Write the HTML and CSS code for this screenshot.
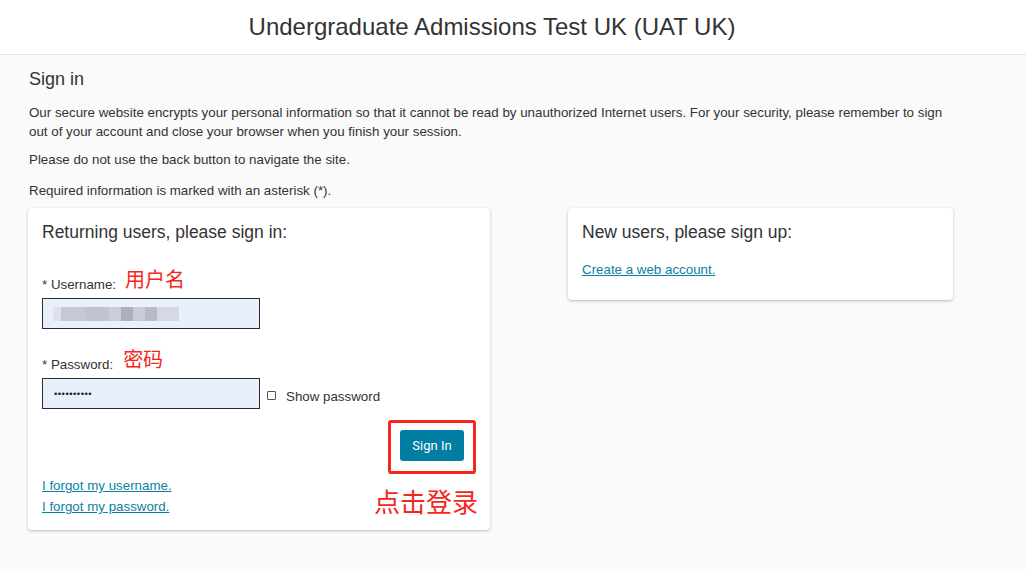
FILE: index.html
```html
<!DOCTYPE html>
<html>
<head>
<meta charset="utf-8">
<link rel="stylesheet" href="styles.css">
</head>
<body>
<header class="top">
  <h1 class="title">Undergraduate Admissions Test UK (UAT UK)</h1>
</header>
<main class="page">
  <h2 class="page-title">Sign in</h2>
  <p class="intro">Our secure website encrypts your personal information so that it cannot be read by unauthorized Internet users. For your security, please remember to sign out of your account and close your browser when you finish your session.</p>
  <p class="note">Please do not use the back button to navigate the site.</p>
  <p class="note req">Required information is marked with an asterisk (*).</p>
  <div class="cards">
    <section class="card card-left">
      <h3 class="card-title">Returning users, please sign in:</h3>
      <div class="field field-user">
        <div class="label-row"><span class="label">* Username:</span><span class="anno">用户名</span></div>
        <div class="input"><span class="blur"><i class="b1"></i><i class="b2"></i><i class="b3"></i><i class="b4"></i><i class="b5"></i><i class="b6"></i><i class="b7"></i><i class="b8"></i></span></div>
      </div>
      <div class="field field-pass">
        <div class="label-row"><span class="label">* Password:</span><span class="anno">密码</span></div>
        <div class="input-row">
          <div class="input"><span class="dots">••••••••••</span></div>
          <span class="check"></span><span class="show">Show password</span>
        </div>
      </div>
      <div class="btn-row">
        <div class="highlight"><button class="btn">Sign In</button></div>
      </div>
      <div class="bottom-row">
        <div class="links">
          <a class="link" href="#">I forgot my username.</a>
          <a class="link" href="#">I forgot my password.</a>
        </div>
        <span class="anno big">点击登录</span>
      </div>
    </section>
    <section class="card card-right">
      <h3 class="card-title">New users, please sign up:</h3>
      <a class="link" href="#">Create a web account.</a>
    </section>
  </div>
</main>
</body>
</html>
```
FILE: styles.css
```css
* { box-sizing: border-box; }
html, body { margin: 0; padding: 0; }
body {
  background: #fafafa;
  font-family: "Liberation Sans", Arial, sans-serif;
  color: #333;
  width: 1026px;
  height: 569px;
  overflow: hidden;
}
.top {
  background: #fff;
  height: 55px;
  border-bottom: 1px solid #e3e3e3;
  display: flex;
  align-items: center;
  justify-content: center;
  padding-right: 42px;
}
.title {
  margin: 0;
  font-weight: 400;
  font-size: 24px;
  color: #333;
  padding-bottom: 1px;
}
.page {
  padding: 13px 28px 0 29px;
}
.page-title {
  margin: 0 0 13px 0;
  font-weight: 400;
  font-size: 18px;
  line-height: 22px;
  color: #333;
}
.intro, .note {
  margin: 0;
  font-size: 13.33px;
  line-height: 19px;
  color: #333;
  width: 925px;
}
.intro { margin-bottom: 9px; }
.note { margin-bottom: 12px; }
.note.req { margin-bottom: 8px; }
.cards {
  display: flex;
  align-items: flex-start;
  gap: 78px;
  margin-left: -1px;
}
.card {
  background: #fff;
  border-radius: 4px;
  box-shadow: 0 1px 3px rgba(0,0,0,0.25);
  padding: 13px 14px 12px;
}
.card-left { width: 462px; height: 322px; }
.card-right { width: 385px; height: 92px; }
.card-title {
  margin: 0;
  font-weight: 400;
  font-size: 17.5px;
  line-height: 22px;
  color: #333;
}
.field-user { margin-top: 24px; }
.field-pass { margin-top: 18px; }
.label-row {
  display: flex;
  align-items: center;
  height: 28px;
}
.label { font-size: 13.33px; padding-top: 6px; }
.anno {
  color: #f5271d;
  font-family: "Noto Sans CJK SC", sans-serif;
  font-size: 20px;
  margin-left: 10px;
  margin-top: -6px;
}
.field-user .anno { margin-left: 9px; }
.input {
  margin-top: 3px;
  width: 218px;
  height: 31px;
  background: #e8f0fe;
  border: 1px solid #2b2b2b;
  display: flex;
  align-items: center;
  padding-left: 10px;
}
.blur { display: flex; height: 14px; margin-left: 0; }
.blur i { display: block; height: 100%; }
.b1 { width: 8px; background: #dfe2ea; }
.b2 { width: 24px; background: #c6c9d3; }
.b3 { width: 24px; background: #c1c4ce; }
.b4 { width: 12px; background: #cbced8; }
.b5 { width: 12px; background: #adb0b9; }
.b6 { width: 12px; background: #c9ccd6; }
.b7 { width: 12px; background: #b7bbc5; }
.b8 { width: 22px; background: #d5d9e3; }
.input-row { display: flex; align-items: center; }
.dots { font-size: 9px; letter-spacing: -1.5px; color: #222; font-family: "DejaVu Sans", sans-serif; }
.check {
  width: 9px; height: 9px;
  border: 1px solid #555;
  border-radius: 1px;
  margin-left: 7px;
  margin-top: 6px;
}
.show { font-size: 13.33px; margin-left: 10px; margin-top: 9px; }
.btn-row { display: flex; justify-content: flex-end; margin-top: 11px; margin-right: 0; }
.highlight {
  border: 3px solid #f5271d;
  border-radius: 3px;
  width: 88px;
  height: 54px;
  display: flex;
  align-items: center;
  justify-content: center;
}
.btn {
  background: #007ea3;
  color: #fff;
  border: none;
  border-radius: 3px;
  font-family: Roboto, "Liberation Sans", sans-serif;
  font-size: 13px;
  width: 64px;
  height: 31px;
  padding: 0;
  margin-top: -3px;
}
.bottom-row { display: flex; justify-content: space-between; align-items: flex-start; margin-top: 3px; }
.links { display: flex; flex-direction: column; gap: 4px; }
.link {
  color: #0b7fa3;
  font-size: 13.33px;
  line-height: 17px;
  text-decoration: underline;
}
.anno.big { font-size: 26px; margin-top: 5px; margin-right: -2px; }
.card-right .link { display: inline-block; margin-top: 18px; }
```
